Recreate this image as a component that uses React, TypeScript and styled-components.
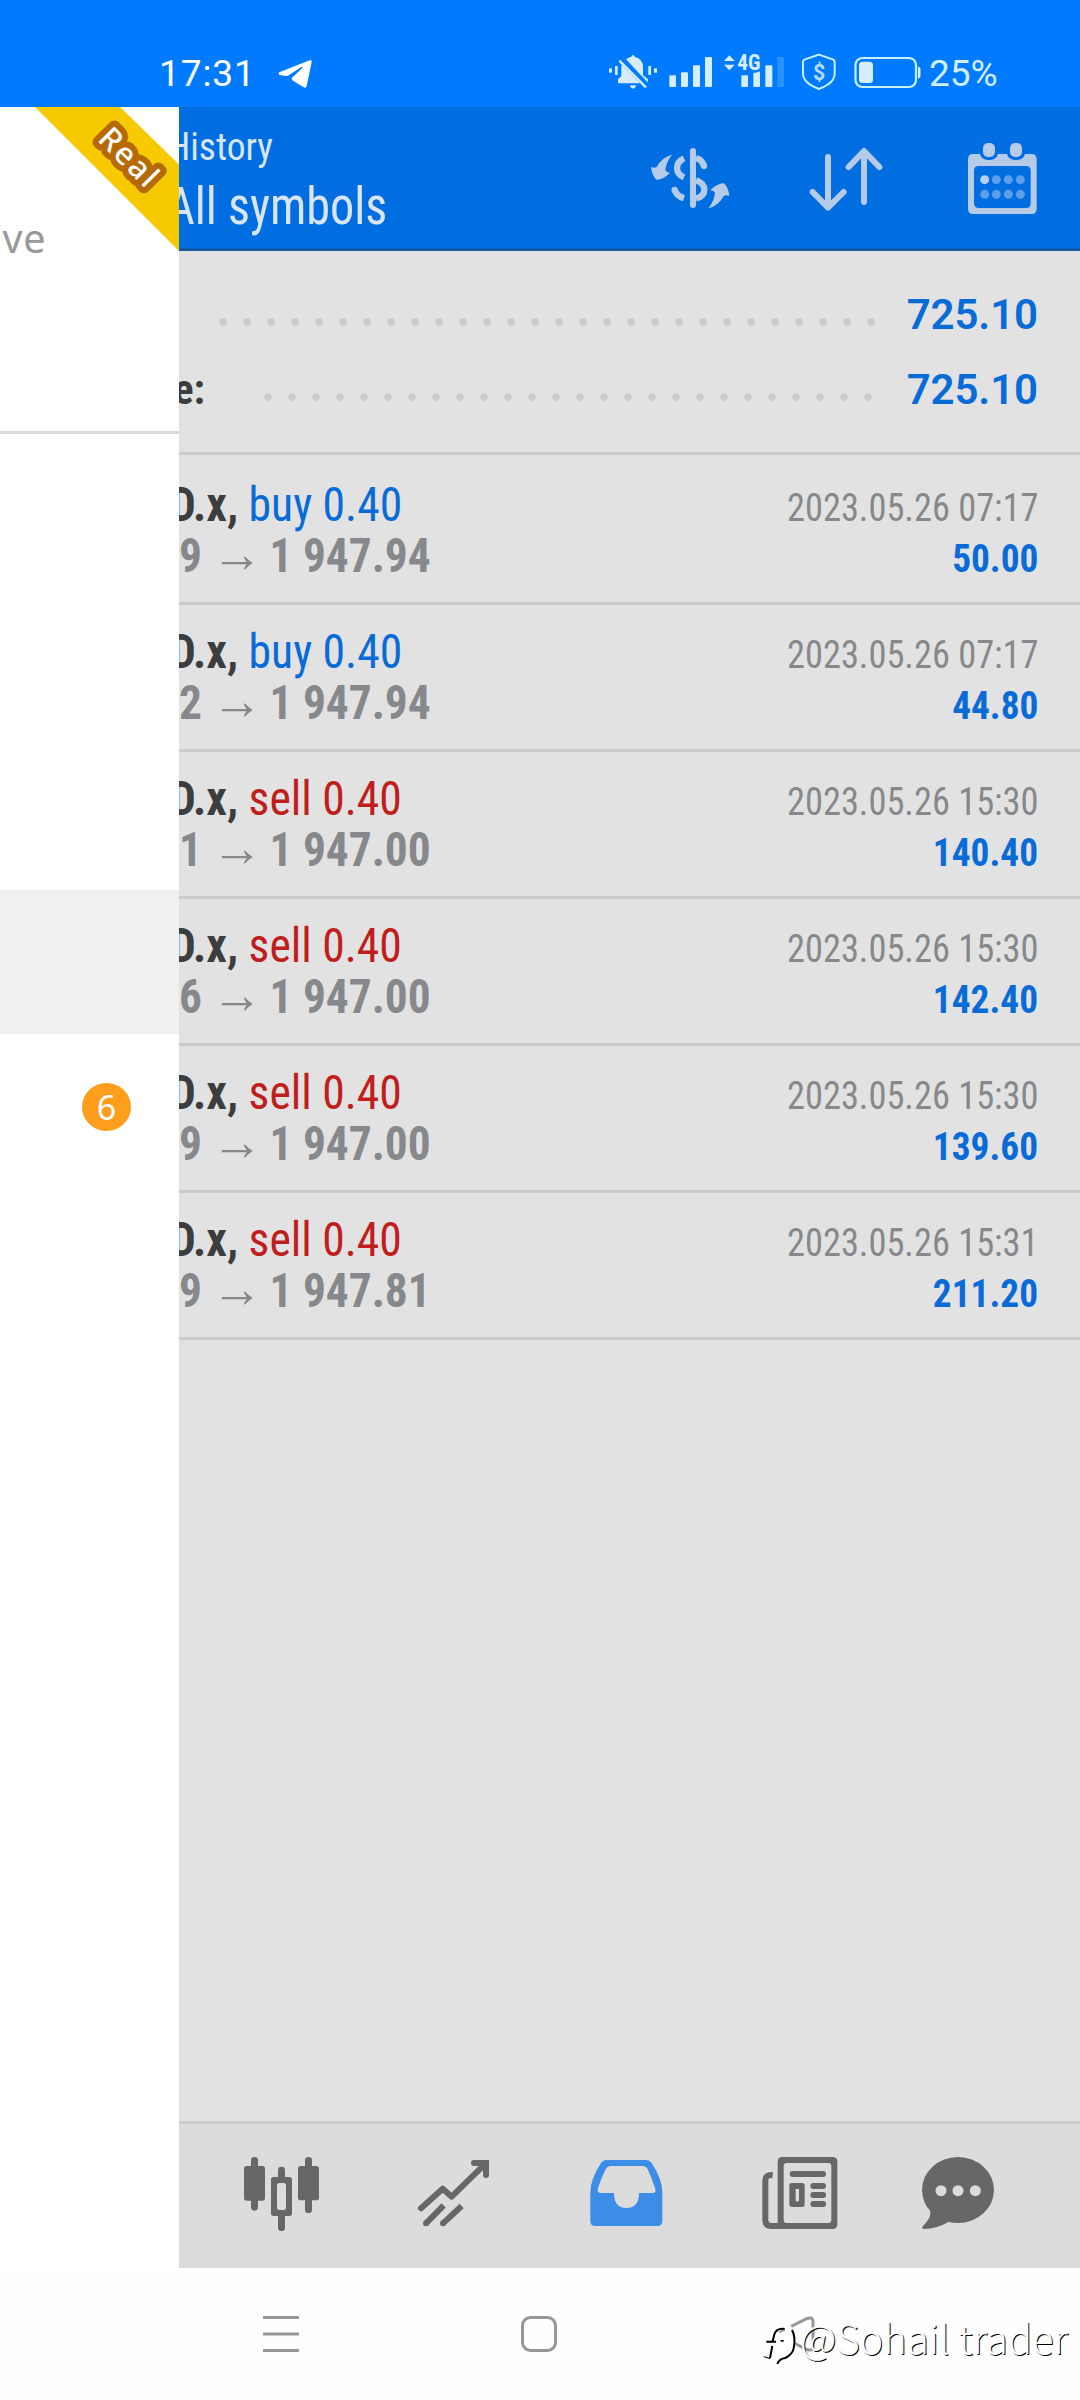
import React from 'react';
import styled, { createGlobalStyle } from 'styled-components';

const condensed = `"Roboto Condensed", Roboto, sans-serif`;
const roboto = `Roboto, sans-serif`;
const noto = `"Noto Sans", sans-serif`;

const GlobalStyle = createGlobalStyle`
  html, body { margin: 0; padding: 0; background: #fefefe; }
  *, *::before, *::after { box-sizing: border-box; }
`;

const Screen = styled.div`
  position: relative;
  display: flex;
  flex-direction: column;
  width: 1080px;
  height: 2400px;
  overflow: hidden;
  background: #fefefe;
`;

/* Status bar */
const StatusBar = styled.header`
  display: flex;
  justify-content: space-between;
  height: 107px;
  padding: 52px 0 0 159px;
  background: #007bff;
`;

const StatusGroup = styled.div<{ $pad?: number }>`
  display: flex;
  align-items: flex-start;
  padding-right: ${p => p.$pad ?? 0}px;
`;

const StatusText = styled.span<{ $top: number; $color: string; $spacing?: number; $width: number }>`
  width: ${p => p.$width}px;
  margin-top: ${p => p.$top}px;
  font: 450 37px/40px ${roboto};
  letter-spacing: ${p => p.$spacing ?? 0}px;
  color: ${p => p.$color};
  white-space: nowrap;
`;

const StatusIcon = styled.svg<{ $w: number; $h?: number; $ml?: number; $mt?: number }>`
  display: block;
  flex: none;
  width: ${p => p.$w}px;
  height: ${p => p.$h ?? 40}px;
  margin-left: ${p => p.$ml ?? 0}px;
  margin-top: ${p => p.$mt ?? 0}px;
  fill: #d6edff;
`;

/* App body */
const Body = styled.div`
  display: flex;
  height: 2161px;
`;

const Drawer = styled.aside`
  position: relative;
  flex: none;
  width: 179px;
  overflow: hidden;
  background: #fff;
`;

const Account = styled.div`
  height: 327px;
  padding-top: 107px;
  border-bottom: 3px solid #d9d9d9;
`;

const AccountName = styled.div`
  margin-left: -8.5px;
  font: 400 39.5px/48px ${noto};
  letter-spacing: 0.7px;
  color: #999;
`;

const Ribbon = styled.svg`
  position: absolute;
  top: 0;
  right: 0;
  width: 144px;
  height: 144px;
`;

const MenuList = styled.nav`
  padding-top: 24px;
`;

const MenuItem = styled.div<{ $active?: boolean }>`
  display: flex;
  align-items: center;
  justify-content: flex-end;
  height: 144px;
  padding-right: 48px;
  background: ${p => (p.$active ? '#f0f0f0' : 'transparent')};
`;

const Badge = styled.span`
  width: 49px;
  height: 48px;
  margin-top: 2px;
  border-radius: 50%;
  background: #ff9d1c;
  color: #fff;
  font: 400 34px/48px ${noto};
  text-align: center;
`;

const Main = styled.main`
  display: flex;
  flex-direction: column;
  width: 901px;
  overflow: hidden;
  background: #e2e2e2;
`;

const Toolbar = styled.div`
  display: flex;
  align-items: center;
  justify-content: space-between;
  height: 144px;
  padding-right: 42px;
  background: #006de0;
  border-bottom: 3px solid #125ba9;
`;

const Titles = styled.div`
  align-self: flex-start;
  margin-left: -12px;
  padding-top: 13px;
  color: #d8e5f5;
  transform: scaleX(0.945);
  transform-origin: left;
  white-space: nowrap;
`;

const Title = styled.div`
  font: 400 39.7px/54px ${condensed};
`;

const Subtitle = styled.div`
  font: 400 51px/66px ${condensed};
`;

const Actions = styled.div`
  display: grid;
  grid-template-columns: 158px 159px 71px;
`;

const ToolIcon = styled.svg<{ $w: number }>`
  display: block;
  width: ${p => p.$w}px;
  height: 74px;
  fill: #b5cbe7;
`;

const Summary = styled.section`
  height: 204px;
  padding: 26px 42px 0 0;
  border-bottom: 3px solid #cbcbcb;
`;

const SummaryRow = styled.div`
  display: flex;
  align-items: center;
  height: 75px;
`;

const SummaryLabel = styled.span<{ $width: number }>`
  width: ${p => p.$width}px;
  text-indent: -5.5px;
  font: 700 42px/49px ${condensed};
  color: #3d3d3d;
`;

const Dots = styled.span<{ $count: number }>`
  width: ${p => p.$count * 24}px;
  height: 24px;
  margin-top: 15px;
  background: radial-gradient(circle at 12px 12px, #cbcbcb 3.4px, transparent 4.2px) 0 0 / 24px 24px;
`;

const SummaryValue = styled.span`
  margin-left: auto;
  font: 650 42px/49px ${roboto};
  letter-spacing: -0.1px;
  color: #096bd6;
`;

const Deals = styled.section`
  flex: 1;
  padding-top: 3px;
`;

const Deal = styled.article`
  height: 147px;
  padding: 21px 42px 0 0;
  border-bottom: 3px solid #cbcbcb;
`;

const Line = styled.div`
  display: flex;
  align-items: baseline;
  justify-content: space-between;
  height: 51px;
  white-space: nowrap;
`;

const Symbol = styled.span`
  margin-left: -9.5px;
  font: 700 48px/51px ${condensed};
  color: #3d3d3d;
  transform: scaleX(0.95);
  transform-origin: left;
`;

const Side = styled.span<{ $sell: boolean }>`
  font-weight: 400;
  color: ${p => (p.$sell ? '#c01d1d' : '#096bd6')};
`;

const Prices = styled.span`
  font: 700 48px/51px ${condensed};
  color: #87888b;
  transform: scaleX(0.945);
  transform-origin: left;
`;

const Arrow = styled.span`
  margin: 0 7.5px 0 10px;
  font-size: 54px;
  font-weight: 400;
  line-height: 0;
`;

const DealTime = styled.span`
  font: 400 38.7px/51px ${condensed};
  color: #87888b;
  transform: scaleX(0.94);
  transform-origin: right;
`;

const Profit = styled.span`
  font: 700 38.7px/51px ${condensed};
  color: #096bd6;
  transform: scaleX(0.965);
  transform-origin: right;
`;

const TabBar = styled.nav`
  display: grid;
  grid-template-columns: 174px 173px 172px 159px 74px;
  align-items: center;
  height: 147px;
  padding: 0 0 2px 64px;
  background: #dcdcdc;
  border-top: 3px solid #cbcbcb;
`;

const TabIcon = styled.svg<{ $w: number; $active?: boolean }>`
  display: block;
  width: ${p => p.$w}px;
  height: 80px;
  fill: ${p => (p.$active ? '#3b8de6' : '#676767')};
  stroke: none;
`;

/* System navigation */
const SystemNav = styled.footer`
  display: grid;
  grid-template-columns: 258px 258px 36px;
  align-items: center;
  height: 132px;
  padding-left: 263px;
`;

const NavIcon = styled.svg`
  display: block;
  width: 36px;
  height: 36px;
  fill: none;
  stroke: #979797;
  stroke-width: 3;
`;

const Watermark = styled.div`
  position: absolute;
  left: 761px;
  top: 2308px;
  display: flex;
  font: 300 40px/58px "Noto Sans CJK SC", sans-serif;
  color: #fff;
  text-shadow: 1px 1px 0 #000;
  white-space: nowrap;
`;

const WatermarkLogo = styled.svg`
  display: block;
  width: 39px;
  height: 58px;
`;

type DealData = { side: 'buy' | 'sell'; from: string; to: string; time: string; profit: string };

const deals: DealData[] = [
  { side: 'buy', from: '9', to: '1 947.94', time: '2023.05.26 07:17', profit: '50.00' },
  { side: 'buy', from: '2', to: '1 947.94', time: '2023.05.26 07:17', profit: '44.80' },
  { side: 'sell', from: '1', to: '1 947.00', time: '2023.05.26 15:30', profit: '140.40' },
  { side: 'sell', from: '6', to: '1 947.00', time: '2023.05.26 15:30', profit: '142.40' },
  { side: 'sell', from: '9', to: '1 947.00', time: '2023.05.26 15:30', profit: '139.60' },
  { side: 'sell', from: '9', to: '1 947.81', time: '2023.05.26 15:31', profit: '211.20' },
];

const TelegramIcon = () => (
  <StatusIcon $w={34} $h={30} $ml={23} $mt={7} viewBox="834 27 102 90">
    <path fill="#fff" d="M838 67L929 31Q936 29 935 36L920 108Q918 116 911 112L879 92Q871 86 879 80L907 54Q908 50 903 52L866 76Q862 79 856 78L839 75Q833 71 838 67Z" />
  </StatusIcon>
);

const MutedBellIcon = () => (
  <StatusIcon $w={48} viewBox="27 66 144 120">
    <rect x="27" y="115" width="9" height="13" />
    <rect x="45" y="108" width="8" height="27" />
    <rect x="145" y="108" width="8" height="27" />
    <rect x="162" y="115" width="9" height="13" />
    <path d="M54 160V148L64 138V112Q64 106 66 104L120 160Z" />
    <path d="M78 88Q86 82 94 80Q95 75 99 75Q103 75 104 80Q129 86 129 112V136L144 148V156L141 155Z" />
    <path d="M90 166H108Q106 176 99 176Q92 176 90 166Z" />
    <path d="M58 92L138 172" stroke="#d6edff" strokeWidth="7" />
  </StatusIcon>
);

const SignalIcon = () => (
  <StatusIcon $w={43} $ml={12} viewBox="207 66 129 120">
    <rect x="208" y="136" width="20" height="35" rx="3" />
    <rect x="243" y="127" width="21" height="44" rx="3" />
    <rect x="279" y="106" width="21" height="65" rx="3" />
    <rect x="315" y="81" width="21" height="90" rx="3" />
  </StatusIcon>
);

const NetworkIcon = () => (
  <StatusIcon $w={60} $ml={12} viewBox="372 66 180 120">
    <path d="M372 93L388 76L404 93ZM372 104H404L388 121Z" />
    <text x="412" y="121" fontFamily="Roboto Condensed, sans-serif" fontWeight="700" fontSize="64">4G</text>
    <rect x="424" y="136" width="20" height="35" rx="3" />
    <path d="M460 129Q470 129 480 124V168Q480 171 477 171H463Q460 171 460 168Z" />
    <rect x="496" y="106" width="21" height="65" rx="3" />
    <rect x="532" y="81" width="20" height="90" rx="3" opacity="0.2" />
  </StatusIcon>
);

const ShieldIcon = () => (
  <StatusIcon $w={34} $ml={18} viewBox="606 66 102 120">
    <path d="M657 74L698 88Q704 90 704 97V130Q704 160 657 177Q609 160 609 130V97Q609 90 615 88Z" fill="none" stroke="#c8f0ff" strokeWidth="6" />
    <text x="657" y="149" textAnchor="middle" fontFamily="Roboto, sans-serif" fontWeight="700" fontSize="64" fill="#b5dcff">$</text>
  </StatusIcon>
);

const BatteryIcon = () => (
  <StatusIcon $w={67} $ml={18} viewBox="0 52 67 40">
    <rect x="1.5" y="58" width="60.5" height="29" rx="7" fill="none" stroke="#c8f0ff" strokeWidth="2.2" />
    <rect x="5" y="61.7" width="14" height="21.3" rx="3.5" />
    <path d="M64 66.5Q66.500 67 66.500 69V76Q66.500 78 64 78.500Z" />
  </StatusIcon>
);

const CurrencySwapIcon = () => {
  const swoosh = 'M96 71Q66 78 50 108Q42 113 33 108Q36 134 49 146Q66 148 90 126Q80 124 76 118Q78 94 96 71Z';
  return (
    <ToolIcon $w={80} viewBox="30 30 240 222">
      <path d={swoosh} />
      <path d={swoosh} transform="rotate(180 150.500 151.500)" />
      <rect x="150" y="51" width="18" height="180" rx="9" />
      <g fill="none" stroke="#b5cbe7" strokeWidth="19">
        <path d="M132 82Q111 92 111 111Q111 130 132 139" />
        <path d="M168 81Q188 87 192 106" />
        <path d="M132 202Q109 195 104 176" />
        <path d="M168 148Q193 157 193 176Q193 196 168 202" />
      </g>
      <circle cx="192" cy="105" r="9.500" />
      <circle cx="104" cy="177" r="9.500" />
    </ToolIcon>
  );
};

const SortIcon = () => (
  <ToolIcon $w={76} viewBox="504 30 228 222">
    <path
      d="M564 78V229M518 183L564 230L611 183M672 213V62M626 108L672 60L718 108"
      fill="none"
      stroke="#b5cbe7"
      strokeWidth="18"
      strokeLinecap="round"
      strokeLinejoin="round"
    />
  </ToolIcon>
);

const CalendarIcon = () => (
  <ToolIcon $w={71} viewBox="981 30 213 222">
    <path
      fillRule="evenodd"
      d="M1000 69H1174Q1190 69 1190 85V233Q1190 249 1174 249H1000Q984 249 984 233V85Q984 69 1000 69ZM1016 105Q1002 105 1002 119V217Q1002 231 1016 231H1158Q1172 231 1172 217V119Q1172 105 1158 105Z"
    />
    {[1029, 1110].map(x => (
      <g key={x}>
        <rect x={x - 9} y="27" width="54" height="60" rx="22" fill="#006de0" />
        <rect x={x} y="36" width="36" height="42" rx="15" />
      </g>
    ))}
    {[146, 190].map(y =>
      [1034, 1069, 1105, 1141].map((x, i) => (
        <circle key={`${x}-${y}`} cx={x} cy={y} r="13.500" fill={y === 146 && i === 0 ? '#b5d0f0' : '#5c9ee8'} />
      )),
    )}
  </ToolIcon>
);

const QuotesIcon = () => (
  <TabIcon $w={77} viewBox="249 165 231 240">
    <rect x="273" y="171" width="21" height="161" rx="10" />
    <rect x="252" y="198" width="63" height="104" rx="8" />
    <rect x="354" y="200" width="21" height="45" rx="10" />
    <rect x="354" y="335" width="21" height="58" rx="10" />
    <path fillRule="evenodd" d="M341 231H388Q396 231 396 239V340Q396 348 388 348H341Q333 348 333 340V239Q333 231 341 231ZM358 249Q351 249 351 256V323Q351 330 358 330H371Q378 330 378 323V256Q378 249 371 249Z" />
    <rect x="435" y="171" width="21" height="168" rx="10" />
    <rect x="414" y="198" width="63" height="103" rx="8" />
  </TabIcon>
);

const ChartIcon = () => (
  <TabIcon $w={73} viewBox="771 165 219 240">
    <g fill="none" stroke="#676767" strokeWidth="18">
      <path d="M783 325L848 266L875 290L974 193" strokeLinecap="round" strokeLinejoin="round" />
      <path d="M942 189H978V225" strokeLinecap="round" />
      <path d="M798 370L851 316M849 370L905 318" />
    </g>
    <circle cx="798" cy="370" r="9" />
    <circle cx="849" cy="370" r="9" />
  </TabIcon>
);

const HistoryIcon = () => (
  <TabIcon $w={73} $active viewBox="30 45 219 240">
    <path
      fillRule="evenodd"
      d="M80 60H199Q209 60 215 69Q247 118 247 158V243Q247 258 232 258H46Q31 258 31 243V158Q31 118 63 69Q69 60 80 60ZM94 78Q82 78 77 88Q64 114 53 147Q52 159 62 159H102Q102 204 139 204Q177 204 177 159H218Q229 159 226 147Q215 114 203 88Q198 78 187 78Z"
    />
  </TabIcon>
);

const NewsIcon = () => (
  <TabIcon $w={76} viewBox="546 45 228 240">
    <path
      fillRule="evenodd"
      d="M607 51H758Q772 51 772 65V253Q772 267 758 267H607Q593 267 593 253V65Q593 51 607 51ZM621 69Q611 69 611 79V239Q611 249 621 249H744Q754 249 754 239V79Q754 69 744 69Z"
    />
    <path d="M578 105Q556 103 556 122V240Q556 258 575 258H604" fill="none" stroke="#676767" strokeWidth="18" />
    <rect x="629" y="93" width="109" height="18" rx="9" />
    <path fillRule="evenodd" d="M636 129H666Q674 129 674 137V193Q674 201 666 201H636Q628 201 628 193V137Q628 129 636 129ZM647 147V184H657V147Z" />
    <rect x="691" y="129" width="47" height="18" rx="9" />
    <rect x="691" y="156" width="47" height="18" rx="9" />
    <rect x="691" y="183" width="47" height="18" rx="9" />
  </TabIcon>
);

const ChatIcon = () => (
  <TabIcon $w={74} viewBox="903 165 222 240">
    <ellipse cx="1014" cy="270" rx="108" ry="99" />
    <path d="M930 330Q936 352 910 377Q901 386 912 387Q950 387 990 364Z" />
    <g fill="#dcdcdc">
      <circle cx="963" cy="272" r="16.500" />
      <circle cx="1014" cy="272" r="16.500" />
      <circle cx="1066" cy="272" r="16.500" />
    </g>
  </TabIcon>
);

export default function App() {
  return (
    <Screen>
      <GlobalStyle />
      <StatusBar>
        <StatusGroup>
          <StatusText $top={2} $color="#fff" $spacing={0.9} $width={96}>17:31</StatusText>
          <TelegramIcon />
        </StatusGroup>
        <StatusGroup $pad={81}>
          <MutedBellIcon />
          <SignalIcon />
          <NetworkIcon />
          <ShieldIcon />
          <BatteryIcon />
          <StatusGroup $pad={8} />
          <StatusText $top={2} $color="#cdefff" $width={70}>25%</StatusText>
        </StatusGroup>
      </StatusBar>

      <Body>
        <Drawer>
          <Account>
            <AccountName>ive</AccountName>
          </Account>
          <Ribbon viewBox="0 0 144 144">
            <polygon points="0,0 85,0 144,57.500 144,144" fill="#f7ca00" />
            <text
              transform="translate(61.500 33) rotate(45)"
              fontFamily="Noto Sans, sans-serif"
              fontWeight="550"
              fontSize="31"
              letterSpacing="2"
              fill="#fff"
              stroke="#b66905"
              strokeWidth="12"
              strokeLinejoin="round"
              paintOrder="stroke"
            >
              Real
            </text>
          </Ribbon>
          <MenuList>
            <MenuItem />
            <MenuItem />
            <MenuItem />
            <MenuItem $active />
            <MenuItem>
              <Badge>6</Badge>
            </MenuItem>
          </MenuList>
        </Drawer>

        <Main>
          <Toolbar>
            <Titles>
              <Title>History</Title>
              <Subtitle>All symbols</Subtitle>
            </Titles>
            <Actions>
              <CurrencySwapIcon />
              <SortIcon />
              <CalendarIcon />
            </Actions>
          </Toolbar>

          <Summary>
            <SummaryRow>
              <SummaryLabel $width={32} />
              <Dots $count={28} />
              <SummaryValue>725.10</SummaryValue>
            </SummaryRow>
            <SummaryRow>
              <SummaryLabel $width={77}>e:</SummaryLabel>
              <Dots $count={26} />
              <SummaryValue>725.10</SummaryValue>
            </SummaryRow>
          </Summary>

          <Deals>
            {deals.map((d, i) => (
              <Deal key={i}>
                <Line>
                  <Symbol>
                    D.x, <Side $sell={d.side === 'sell'}>{d.side} 0.40</Side>
                  </Symbol>
                  <DealTime>{d.time}</DealTime>
                </Line>
                <Line>
                  <Prices>
                    {d.from}
                    <Arrow>→</Arrow>
                    {d.to}
                  </Prices>
                  <Profit>{d.profit}</Profit>
                </Line>
              </Deal>
            ))}
          </Deals>

          <TabBar>
            <QuotesIcon />
            <ChartIcon />
            <HistoryIcon />
            <NewsIcon />
            <ChatIcon />
          </TabBar>
        </Main>
      </Body>

      <SystemNav>
        <NavIcon viewBox="0 0 36 36">
          <path d="M0 1.500H36M0 18H36M0 34.500H36" />
        </NavIcon>
        <NavIcon viewBox="0 0 36 36">
          <rect x="1.500" y="1.500" width="33" height="33" rx="8" />
        </NavIcon>
        <NavIcon viewBox="0 0 36 36">
          <path d="M4 14.500L28 2.500Q33.500 0.500 34 5V31Q33.500 35.500 28 33.500L4 21.500Q0 18 4 14.500Z" />
        </NavIcon>
      </SystemNav>

      <Watermark>
        <WatermarkLogo viewBox="63 84 117 174">
          <path d="M84 140L108 136H152L166 160V200L176 216L130 240L84 236Z" fill="#fff" />
          <path d="M118 158Q124 151 134 151" fill="none" stroke="#979797" strokeWidth="6" />
          <g fill="none" stroke="#000" strokeWidth="6">
            <path d="M134 147Q110 143 103 163L98 184M79 185H108M97 198L90 234" />
            <path d="M71 230L90 236" strokeWidth="3" />
            <path d="M156 150Q168 172 161 205Q158 222 136 234Q118 236 112 252" />
          </g>
          <rect x="122" y="180" width="9" height="5" fill="#000" />
        </WatermarkLogo>
        @Sohail trader
      </Watermark>
    </Screen>
  );
}
